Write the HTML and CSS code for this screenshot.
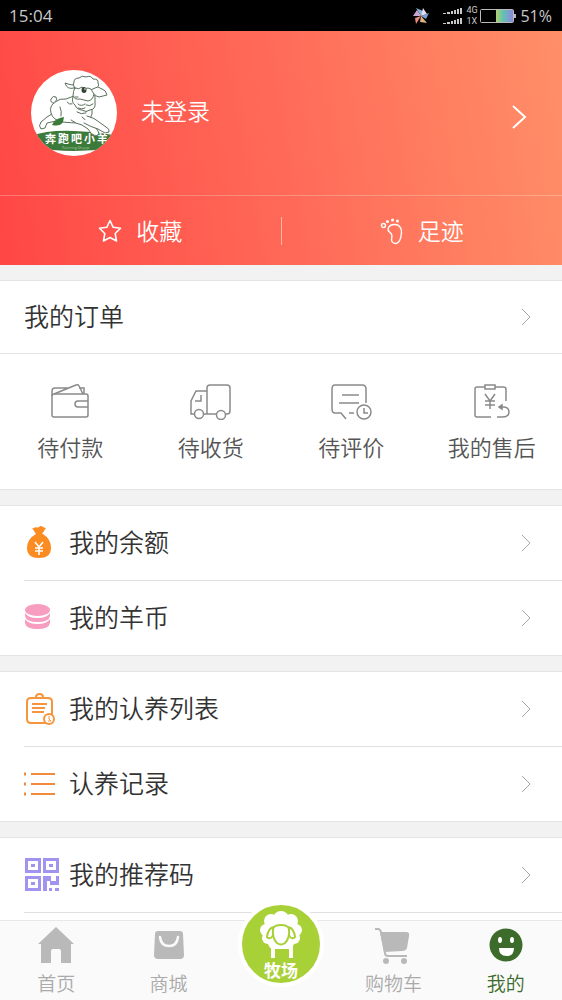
FILE: index.html
```html
<!DOCTYPE html>
<html lang="zh-CN">
<head>
  <meta charset="UTF-8">
  <meta name="viewport" content="width=device-width, initial-scale=1">
  <title>我的</title>
  <link rel="stylesheet" href="styles.css">
</head>
<body>
  <div class="status">
    <span class="time">15:04</span>
    <div class="status-right">
      <svg width="18" height="18" viewBox="0 0 18 18">
        <path d="M9 9L4 1l7 3z" fill="#8fb4d8"/>
        <path d="M9 9l2-8 4 6z" fill="#e0e0ee"/>
        <path d="M9 9l8-3-3 6z" fill="#7f9fd0"/>
        <path d="M9 9l6 7-7-1z" fill="#e0b080"/>
        <path d="M9 9l-5 8-1-6z" fill="#e88a80"/>
        <path d="M9 9L1 9l4-6z" fill="#c8a8d0"/>
      </svg>
      <svg class="signal" width="22" height="18" viewBox="0 0 22 18" fill="#c8c8c8">
        <path d="M1 6h3v1H1zM5 5h3v2H5zM9 4h2v3H9zM12 3h2v4h-2zM15 2h2v5h-2zM18 1h2v6h-2z"/>
        <path d="M1 16h3v1H1zM5 15h3v2H5zM9 14h2v3H9zM12 13h2v4h-2zM15 12h2v5h-2zM18 11h2v6h-2z"/>
      </svg>
      <div class="net"><span>4G</span><span>1X</span></div>
      <svg width="36" height="14" viewBox="0 0 36 14">
        <defs>
          <linearGradient id="batt">
            <stop offset="0" stop-color="#b5d06a"/>
            <stop offset=".4" stop-color="#62c4b0"/>
            <stop offset="1" stop-color="#8f86e0"/>
          </linearGradient>
        </defs>
        <rect x="16" y="1" width="17" height="12" fill="url(#batt)"/>
        <rect x=".5" y=".5" width="33" height="13" rx="1" fill="none" stroke="#bbb"/>
        <path d="M34 5h2v4h-2z" fill="#bbb"/>
      </svg>
      <span class="percent">51%</span>
    </div>
  </div>

  <main class="content">
    <header class="hero">
      <a class="profile" href="#login">
        <svg class="avatar" viewBox="0 0 86 86">
          <defs><clipPath id="round"><circle cx="43" cy="43" r="43"/></clipPath></defs>
          <circle cx="43" cy="43" r="43" fill="#fff"/>
          <g clip-path="url(#round)">
            <path d="M0 66Q16 60 43 61T86 66V78Q64 81 43 81T0 77z" fill="#3b7a3a"/>
            <g fill="#fff" stroke="#5a6e5a" stroke-width="1" stroke-linejoin="round" stroke-linecap="round">
              <path d="M24 42l-8 5-6 5q-3 4 0 7l4-1 2-5 9-2 9-5z"/>
              <path d="M24 32q-6 4-4 11 2 7 11 9 10 1 19 1 9-1 11-9l0-10-18-8-8 3q-6-1-11 3z"/>
              <path d="M23 33q-4 0-3-4 2-4 5-2 2 3-1 5"/>
              <path d="M40 50q5 4 11 5l6 4q3 6 8 7l3-2q-1-6-8-9l-9-8"/>
              <path d="M56 46q8 2 12 6l7 5q4 2 3 5l-4 1-7-4q-7-2-14-6"/>
              <path d="M42 27q-2 5 2 8 2 5 7 5 4 3 8 0 6-1 5-7l0-7-10-5z"/>
              <path d="M43 18q-7 2-9-5l3 1q3 1 6 1z"/>
              <path d="M44 17q-2 5-2 9 2 4 7 3l8 2q5-1 6-7V16l-12-3z"/>
              <path d="M60 19q3 7 8 8l8-2q-1-5-5-6l-6-3z"/>
              <path d="M44 18q-3-3-1-6 0-4 5-4 3-3 7-1 5-2 7 2 6 0 5 4 2 4-3 5-3 3-7 0-4 2-6-1-3 3-7 1z"/>
              <path fill="none" d="M29 37q2 4 1 9M36 32q2 3 5 2M46 42q4 3 9 1M55 35q4 2 7-1M47 34q3 3 7 0M44 27l3 0M47 38q4 2 7 0"/>
            </g>
            <path d="M33 47q-9 1-12 8 8 2 11-3z" fill="#3b7a3a"/>
            <ellipse cx="53" cy="20" rx="2.500" ry="3" fill="#344434"/>
            <circle cx="54" cy="19" r=".8" fill="#fff"/>
            <text class="logo-text" x="14 27 40 53 66" y="73">奔跑吧小羊</text>
            <text class="logo-sub" x="31" y="79">Running Sheep</text>
          </g>
        </svg>
        <span class="name">未登录</span>
        <svg class="go" width="16" height="26" viewBox="0 0 16 26"><path d="M2 2l12 11L2 24"/></svg>
      </a>
      <div class="shortcuts">
        <a href="#favorites">
          <svg width="24" height="24" viewBox="0 0 24 24" fill="none" stroke="#fff" stroke-width="1.600" stroke-linejoin="round"><path d="M12 1.500l3.200 6.800 7.300 1-5.300 5.200 1.300 7.500L12 18.500 5.500 22l1.300-7.500L1.500 9.300l7.300-1z"/></svg>
          <span>收藏</span>
        </a>
        <a href="#footprints">
          <svg width="24" height="28" viewBox="0 0 24 28" fill="none" stroke="#fff" stroke-width="1.400">
            <path d="M14 7.500c5-.5 8 3.500 7.500 8.500-.4 4-1.500 10-5.500 10.500-4 .3-5-3-4.200-6 .7-3-.3-4-2.300-5.500C6.500 12.500 8.500 8 14 7.500z"/>
            <circle cx="3.500" cy="8.500" r="2"/>
            <g fill="#fff" stroke="none"><circle cx="7.500" cy="4.500" r="1.500"/><circle cx="12.500" cy="3" r="1.500"/><circle cx="17.500" cy="4" r="1.500"/></g>
          </svg>
          <span>足迹</span>
        </a>
      </div>
    </header>

    <section class="panel">
      <a class="row" href="#orders">
        <span class="label">我的订单</span>
        <svg class="arrow" viewBox="0 0 10 18"><path d="M1 1l8 8-8 8"/></svg>
      </a>
      <nav class="orders">
        <a href="#unpaid">
          <svg viewBox="0 0 42 38">
            <rect x="3" y="12" width="36" height="23" rx="2"/>
            <path d="M3 14V9q0-3 3-3h13M5 12l22-9q2-1 3 1l4 8M30 6h5v6M39 19H29q-3 0-3 3t3 3h10"/>
          </svg>
          待付款
        </a>
        <a href="#shipping">
          <svg viewBox="0 0 42 38">
            <path d="M5 32H1V19l5-10h11v23h-5M17 32V6q0-3 3-3h17q3 0 3 3v23q0 3-3 3h-1M27 32H17M5 19h6v-6"/>
            <circle cx="9" cy="32" r="4.500"/><circle cx="31" cy="33" r="4.500"/>
          </svg>
          待收货
        </a>
        <a href="#comments">
          <svg viewBox="0 0 42 38">
            <path d="M36 21V7q0-4-4-4H5Q2 3 2 7v20q0 4 3 4h6l5 6M12 13h17M9 21h20M19 31h5"/>
            <circle cx="34" cy="30" r="7"/><path d="M34 26v5h4"/>
          </svg>
          待评价
        </a>
        <a href="#aftersale">
          <svg viewBox="0 0 42 38">
            <path d="M14 5H6Q4 5 4 7v26q0 2 2 2h14M24 5h8q3 0 3 2v12M14 3h10v4H14zM26 35h5q7 0 7-5 0-5-6-5h-4"/>
            <path d="M31 23v4l-3-2z" fill="#8a8a8a"/>
            <path d="M14 12l5 7 5-7M19 19v8M14 19h10M14 23h10"/>
          </svg>
          我的售后
        </a>
      </nav>
    </section>

    <ul class="panel list">
      <li><a class="row" href="#balance">
        <svg class="icon" width="36" height="36" viewBox="0 0 36 36">
          <path d="M8 3q2 1 3-1 2 1 4 0 2-2 4 0 2 1 3 1l-4 6H12z" fill="#fb8c22"/>
          <path d="M12 9h7q8 5 8 14 0 10-12 10T3 23Q3 14 12 9z" fill="#fb8c22"/>
          <path d="M11 17l4 5 4-5M15 22v8M11 23h8M11 26h8" fill="none" stroke="#fff" stroke-width="1.600"/>
        </svg>
        <span class="label">我的余额</span>
        <svg class="arrow" viewBox="0 0 10 18"><path d="M1 1l8 8-8 8"/></svg>
      </a></li>
      <li><a class="row" href="#coins">
        <svg class="icon" width="36" height="36" viewBox="0 0 36 36" fill="#f79dbf">
          <ellipse cx="13.500" cy="10" rx="12.500" ry="6"/>
          <path d="M1 13q3 5 12.500 5T26 13v3q-1 6-12.500 6T1 16z"/>
          <path d="M1 19q3 5 12.500 5T26 19v4q-1 6-12.500 6T1 23z"/>
        </svg>
        <span class="label">我的羊币</span>
        <svg class="arrow" viewBox="0 0 10 18"><path d="M1 1l8 8-8 8"/></svg>
      </a></li>
    </ul>

    <ul class="panel list">
      <li><a class="row" href="#adoptions">
        <svg class="icon" width="36" height="36" viewBox="0 0 36 36" fill="none" stroke="#f6953c" stroke-width="2">
          <path d="M22 32H7q-4 0-4-4V11q0-4 4-4h17q4 0 4 4v13"/>
          <path d="M10 7h11M12 6q0-3 3.500-3T19 6M8 13h15M8 17h13M8 21h12"/>
          <circle cx="25" cy="28" r="5" fill="#fff"/>
          <path d="M25 25v3l2 2h-3" stroke-width="1"/>
        </svg>
        <span class="label">我的认养列表</span>
        <svg class="arrow" viewBox="0 0 10 18"><path d="M1 1l8 8-8 8"/></svg>
      </a></li>
      <li><a class="row" href="#records">
        <svg class="icon" width="36" height="36" viewBox="0 0 36 36" stroke="#f08a3c" stroke-width="2">
          <path d="M7 8h24M7 18h24M7 28h24"/>
          <path d="M0 8h2M0 18h2M0 28h2" stroke-width="3"/>
        </svg>
        <span class="label">认养记录</span>
        <svg class="arrow" viewBox="0 0 10 18"><path d="M1 1l8 8-8 8"/></svg>
      </a></li>
    </ul>

    <ul class="panel list">
      <li><a class="row" href="#code">
        <svg class="icon" width="36" height="36" viewBox="0 0 36 36" fill="#a193f0">
          <path fill-rule="evenodd" d="M1 1h16v15H1zM4 4v9h10V4zM19 1h16v15H19zM22 4v9h10V4zM1 19h16v15H1zM4 22v9h10v-9z"/>
          <path d="M7 7h4v3H7zM25 7h4v3h-4zM7 25h4v3H7zM19 19h8v5h5v-5h3v9h-9v-4h-3v10h-4zM25 31h3v3h-3zM31 31h4v3h-4z"/>
        </svg>
        <span class="label">我的推荐码</span>
        <svg class="arrow" viewBox="0 0 10 18"><path d="M1 1l8 8-8 8"/></svg>
      </a></li>
      <li class="spacer"></li>
    </ul>
  </main>

  <nav class="tabbar">
    <a href="#home">
      <svg viewBox="0 0 38 38" fill="#b9b9b9"><path d="M19 1l18 17h-3v19H24V25q0-2-2-2h-6q-2 0-2 2v12H4V18H1z"/></svg>
      首页
    </a>
    <a href="#shop">
      <svg viewBox="0 0 38 38">
        <path d="M8 5h22q3 0 3 3l1 21q0 4-4 4H8q-4 0-4-4L5 8q0-3 3-3z" fill="#b9b9b9"/>
        <path d="M10 11q1 9 9 9t9-9" fill="none" stroke="#fafafa" stroke-width="2.500" stroke-linecap="round"/>
      </svg>
      商城
    </a>
    <a class="ranch" href="#ranch">
      <span class="bubble">
        <svg viewBox="0 0 78 54">
          <path d="M29 40h22v13h-4V44H33v9h-4z" fill="#fff"/>
          <g fill="#fff"><circle cx="39" cy="14" r="8"/><circle cx="29" cy="16" r="7"/><circle cx="49" cy="16" r="7"/><circle cx="24" cy="25" r="6"/><circle cx="54" cy="25" r="6"/><circle cx="26" cy="33" r="6"/><circle cx="52" cy="33" r="6"/><circle cx="32" cy="38" r="6"/><circle cx="46" cy="38" r="6"/><circle cx="39" cy="27" r="14"/></g>
          <g fill="#fff" stroke="#a8d037" stroke-width="2" stroke-linejoin="round">
            <path d="M32 22q-6 1-7 10 4 4 7-4zM46 22q6 1 7 10-4 4-7-4z"/>
            <path d="M31 24q1-4 8-4t8 4q1 9-4 14-4 3-8 0-5-5-4-14z"/>
          </g>
        </svg>
        牧场
      </span>
    </a>
    <a href="#cart">
      <svg viewBox="0 0 38 38">
        <path d="M6 6h26q4 0 3 4l-2 12q-1 3-5 3l-18 1z" fill="#b9b9b9"/>
        <path d="M1 3h3q2 0 3 3l4 21q0 3 3 3h19" fill="none" stroke="#b9b9b9" stroke-width="2"/>
        <circle cx="12" cy="35" r="3" fill="#b9b9b9"/><circle cx="30" cy="35" r="3" fill="#b9b9b9"/>
      </svg>
      购物车
    </a>
    <a class="active" href="#mine">
      <svg viewBox="0 0 38 38">
        <circle cx="19" cy="19" r="16.500" fill="#3c6b2b"/>
        <ellipse cx="13" cy="14" rx="2" ry="3" fill="#fff"/><ellipse cx="25" cy="14" rx="2" ry="3" fill="#fff"/>
        <path d="M12 22h15q0 8-7.500 8T12 22z" fill="#fff"/>
      </svg>
      我的
    </a>
  </nav>
</body>
</html>
```
FILE: styles.css
```css
* { margin: 0; padding: 0; box-sizing: border-box; }
body {
  height: 100vh;
  display: flex;
  flex-direction: column;
  font-family: 'Noto Sans CJK SC', sans-serif;
  font-size: 25px;
  font-weight: 350;
  color: #333;
  background: #f2f2f2;
}
a { color: inherit; text-decoration: none; }
svg { display: block; flex: none; }
ul { list-style: none; }

/* Status bar */
.status { height: 31px; flex: none; padding: 0 10px 0 9px; display: flex; align-items: center; justify-content: space-between; background: #000; color: #c8c8c8; font: 17px 'Open Sans', sans-serif; }
.status-right { display: flex; align-items: center; }
.signal { margin-left: 12px; }
.net { width: 14px; margin-left: 2px; display: flex; flex-direction: column; font-family: Roboto, sans-serif; font-size: 9px; line-height: 11px; }
.percent { margin-left: 4px; font-size: 16px; }

.content { flex: 1; min-height: 0; overflow-y: auto; scrollbar-width: none; }

/* Profile */
.hero { background: linear-gradient(80deg, #ff4745, #ff6a58 50%, #ff8f68); color: #fff; }
.profile { height: 164px; padding: 0 35px 0 31px; display: flex; align-items: center; font-size: 23px; }
.avatar { width: 86px; height: 86px; }
.logo-text { font-size: 11px; font-weight: bold; fill: #fff; }
.logo-sub { font-family: 'Open Sans', sans-serif; font-size: 4px; fill: #cfe0cf; }
.name { flex: 1; margin-left: 24px; padding-bottom: 6px; }
.go { margin-top: 8px; fill: none; stroke: #fff; stroke-width: 2; }
.shortcuts { height: 70px; display: flex; align-items: center; border-top: 1px solid rgba(255, 255, 255, 0.25); }
.shortcuts a { flex: 1; height: 28px; display: flex; align-items: center; justify-content: center; gap: 14px; font-size: 23px; }
.shortcuts span { padding-bottom: 2px; }
.shortcuts a + a { border-left: 1px solid rgba(255, 255, 255, 0.5); }

/* Panels */
.panel { margin: 15px 0; background: #fff; border-top: 1px solid #e4e4e4; border-bottom: 1px solid #e4e4e4; }
.row { height: 74px; padding-right: 31px; display: flex; align-items: center; }
.panel > .row { height: 73px; padding-left: 24px; border-bottom: 1px solid #e4e4e4; }
.list li { margin-left: 24px; }
.list li + li { border-top: 1px solid #e0e0e0; }
.icon { margin-right: 9px; }
.label { flex: 1; padding-bottom: 4px; }
.arrow { width: 10px; height: 18px; fill: none; stroke: #a8a8a8; stroke-width: 1; }
.spacer { height: 74px; }
.orders { height: 135px; padding-top: 28px; display: grid; grid-template-columns: repeat(4, 1fr); }
.orders a { display: flex; flex-direction: column; align-items: center; gap: 10px; font-size: 22px; line-height: 32px; color: #555; }
.orders svg { width: 42px; height: 38px; fill: none; stroke: #8a8a8a; stroke-width: 1.5; }
.orders circle { fill: #fff; }

/* Tab bar */
.tabbar { position: relative; height: 80px; flex: none; display: grid; grid-template-columns: repeat(5, 1fr); background: #fafafa; border-top: 1px solid #e8e8e8; }
.tabbar a { position: relative; padding-top: 5px; display: flex; flex-direction: column; align-items: center; gap: 5px; font-size: 19px; line-height: 28px; color: #aaa; }
.tabbar a > svg { width: 38px; height: 38px; }
.tabbar .active { color: #3c6b2b; }
.bubble { position: absolute; top: -20px; left: 50%; width: 86px; height: 86px; margin-left: -43px; border: 4px solid #fff; border-radius: 50%; background: #a8d037; display: flex; flex-direction: column; align-items: center; font-size: 17px; font-weight: bold; line-height: 22px; color: #fff; }
.bubble svg { width: 78px; height: 54px; }
```
